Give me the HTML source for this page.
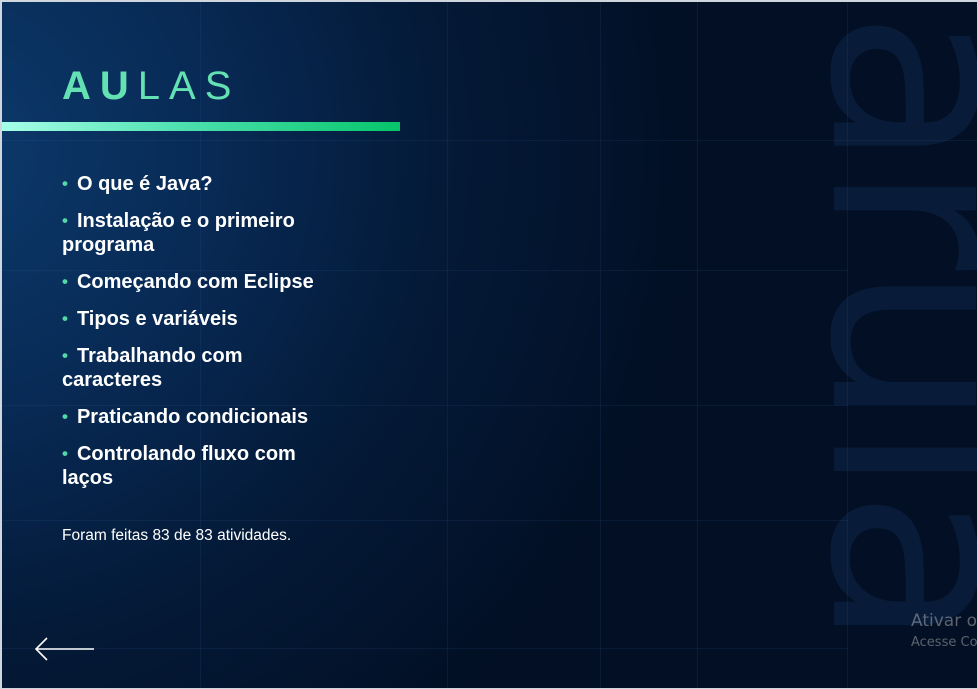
<!DOCTYPE html>
<html><head><meta charset="utf-8"><style>
html,body{margin:0;padding:0;width:978px;height:689px;overflow:hidden}
body{position:relative;font-family:"Liberation Sans",sans-serif;
background:radial-gradient(ellipse 750px 750px at -50px 150px,#0c3a6c 0%,#082a55 35%,#041a38 65%,#020f24 100%);}
.frame{position:absolute;left:0;top:0;width:978px;height:689px;box-sizing:border-box;border-left:2px solid #cfd6de;border-top:2px solid #cfd6de;border-right:1px solid #cfd6de;border-bottom:1px solid #cfd6de;z-index:5}
.g{position:absolute;background:rgba(60,110,170,0.13)}
.big{position:absolute;left:0;top:0;transform-origin:0 0;transform:translate(1053px,10px) rotate(90deg);font-size:260px;line-height:1;font-family:"DejaVu Sans",sans-serif;color:rgba(30,75,130,0.22);letter-spacing:-6px;white-space:nowrap}
h1{position:absolute;left:62px;top:64px;margin:0;font-size:40px;letter-spacing:9px;color:#63e1b3;font-weight:normal}
h1 b{font-weight:bold}
.bar{position:absolute;left:2px;top:122px;width:398px;height:9px;background:linear-gradient(90deg,#a6ffe8,#4ee0b0 45%,#05c56a)}
ul{position:absolute;left:62px;top:172px;margin:0;padding:0;list-style:none;width:262px}
li{color:#fff;font-weight:bold;font-size:20px;line-height:24px;margin-bottom:13px}
li span{color:#55d8a8;font-size:17px;margin-right:9px;vertical-align:1px}
.f{position:absolute;left:62px;top:527px;color:#fff;font-size:15.5px}
.act{position:absolute;left:911px;top:611px;color:rgba(200,200,200,0.45);font-size:17px;font-family:"DejaVu Sans",sans-serif;white-space:nowrap}
.act small{display:block;font-size:13px;margin-top:4px}
</style></head><body>
<div class="g" style="left:200px;top:0;width:1px;height:689px"></div>
<div class="g" style="left:447px;top:0;width:1px;height:689px"></div>
<div class="g" style="left:600px;top:0;width:1px;height:689px"></div>
<div class="g" style="left:697px;top:0;width:1px;height:689px"></div>
<div class="g" style="left:847px;top:0;width:1px;height:689px"></div>
<div class="g" style="left:0;top:140px;width:978px;height:1px"></div>
<div class="g" style="left:0;top:270px;width:848px;height:1px"></div>
<div class="g" style="left:0;top:405px;width:848px;height:1px"></div>
<div class="g" style="left:0;top:520px;width:848px;height:1px"></div>
<div class="g" style="left:0;top:648px;width:848px;height:1px"></div>
<div class="big">arula</div>
<h1><b>AU</b>LAS</h1>
<div class="bar"></div>
<ul>
<li><span>•</span>O que é Java?</li>
<li><span>•</span>Instalação e o primeiro programa</li>
<li><span>•</span>Começando com Eclipse</li>
<li><span>•</span>Tipos e variáveis</li>
<li><span>•</span>Trabalhando com caracteres</li>
<li><span>•</span>Praticando condicionais</li>
<li><span>•</span>Controlando fluxo com laços</li>
</ul>
<div class="f">Foram feitas 83 de 83 atividades.</div>
<svg style="position:absolute;left:33px;top:636px" width="64" height="28" viewBox="0 0 64 28"><path d="M61 13H3M14 2L3 13L14 24" fill="none" stroke="#fff" stroke-width="1.6"/></svg>
<div class="act">Ativar o<small>Acesse Co</small></div>
<div class="frame"></div>
</body></html>
